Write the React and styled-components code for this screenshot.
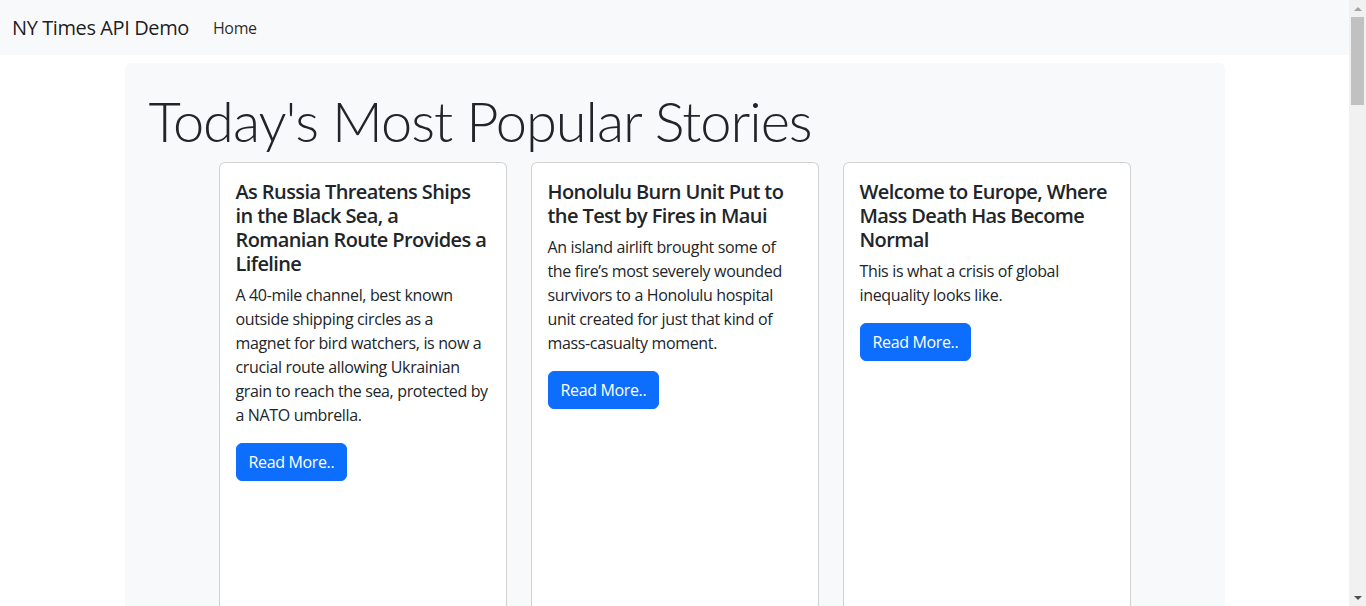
import React from "react";
import styled, { createGlobalStyle } from "styled-components";

const stories = [
  {
    title: "As Russia Threatens Ships in the Black Sea, a Romanian Route Provides a Lifeline",
    abstract:
      "A 40-mile channel, best known outside shipping circles as a magnet for bird watchers, is now a crucial route allowing Ukrainian grain to reach the sea, protected by a NATO umbrella.",
  },
  {
    title: "Honolulu Burn Unit Put to the Test by Fires in Maui",
    abstract:
      "An island airlift brought some of the fire\u2019s most severely wounded survivors to a Honolulu hospital unit created for just that kind of mass-casualty moment.",
  },
  {
    title: "Welcome to Europe, Where Mass Death Has Become Normal",
    abstract: "This is what a crisis of global inequality looks like.",
  },
];

const GlobalStyle = createGlobalStyle`
  html, body {
    margin: 0;
    padding: 0;
  }
  body {
    font-family: "Open Sans", "Noto Sans", "Liberation Sans", sans-serif;
    font-size: 16px;
    line-height: 1.5;
    letter-spacing: -0.35px;
    color: #212529;
    background: #fff;
  }
  #root {
    margin-right: 17px;
  }
  * {
    box-sizing: border-box;
  }
`;

const Navbar = styled.nav`
  display: flex;
  align-items: center;
  height: 55px;
  padding: 8px 12px;
  background: #f8f9fa;
`;

const Brand = styled.a`
  font-size: 20px;
  letter-spacing: -0.4px;
  color: rgba(0, 0, 0, 0.9);
  margin-right: 16px;
  text-decoration: none;
`;

const NavLink = styled.a`
  font-size: 16px;
  padding: 8px;
  color: rgba(0, 0, 0, 0.85);
  text-decoration: none;
`;

const Page = styled.main`
  min-height: 900px;
  padding-top: 8px;
  display: flex;
  justify-content: center;
`;

const Jumbo = styled.section`
  width: 1100px;
  background: #f8f9fa;
  border-radius: 6px;
  padding: 24px 24px;
`;

const Heading = styled.h1`
  margin: 0 0 8px;
  font-family: Lato, "Open Sans", sans-serif;
  font-size: 56px;
  font-weight: 300;
  letter-spacing: -1.05px;
  line-height: 1.2;
`;

const CardRow = styled.div`
  display: flex;
  justify-content: center;
  gap: 24px;
`;

const Card = styled.article`
  width: 288px;
  min-height: 700px;
  background: #fff;
  border: 1px solid rgba(0, 0, 0, 0.175);
  border-radius: 6px;
  padding: 17px 16px 16px;
`;

const CardTitle = styled.h5`
  margin: 0 0 8px;
  font-size: 20px;
  font-weight: 600;
  letter-spacing: -0.6px;
  line-height: 1.2;
`;

const CardText = styled.p`
  margin: -1px 0 16px;
`;

const Button = styled.a`
  display: inline-block;
  padding: 6px 12px;
  font-size: 16px;
  line-height: 1.5;
  color: #fff;
  background: #0d6efd;
  border: 1px solid #0d6efd;
  border-radius: 6px;
  text-decoration: none;
`;

const Scrollbar = styled.div`
  position: fixed;
  top: 0;
  right: 0;
  bottom: 0;
  width: 17px;
  background: #f1f1f1;
  display: flex;
  flex-direction: column;
  align-items: center;
`;

const Arrow = styled.div`
  height: 17px;
  display: flex;
  align-items: center;
  justify-content: center;
  margin-top: ${(p) => (p.$down ? "auto" : "0")};

  &::before {
    content: "";
    width: 0;
    height: 0;
    border-left: 4px solid transparent;
    border-right: 4px solid transparent;
    ${(p) =>
      p.$down
        ? "border-top: 4px solid #505050;"
        : "border-bottom: 4px solid #a3a3a3;"}
  }
`;

const Thumb = styled.div`
  width: 13px;
  height: 88px;
  background: #c1c1c1;
`;

export default function App() {
  return (
    <>
      <GlobalStyle />
      <Navbar>
        <Brand href="#">NY Times API Demo</Brand>
        <NavLink href="#">Home</NavLink>
      </Navbar>
      <Page>
        <Jumbo>
          <Heading>Today's Most Popular Stories</Heading>
          <CardRow>
            {stories.map((s) => (
              <Card key={s.title}>
                <CardTitle>{s.title}</CardTitle>
                <CardText>{s.abstract}</CardText>
                <Button href="#">Read More..</Button>
              </Card>
            ))}
          </CardRow>
        </Jumbo>
      </Page>
      <Scrollbar>
        <Arrow />
        <Thumb />
        <Arrow $down />
      </Scrollbar>
    </>
  );
}
